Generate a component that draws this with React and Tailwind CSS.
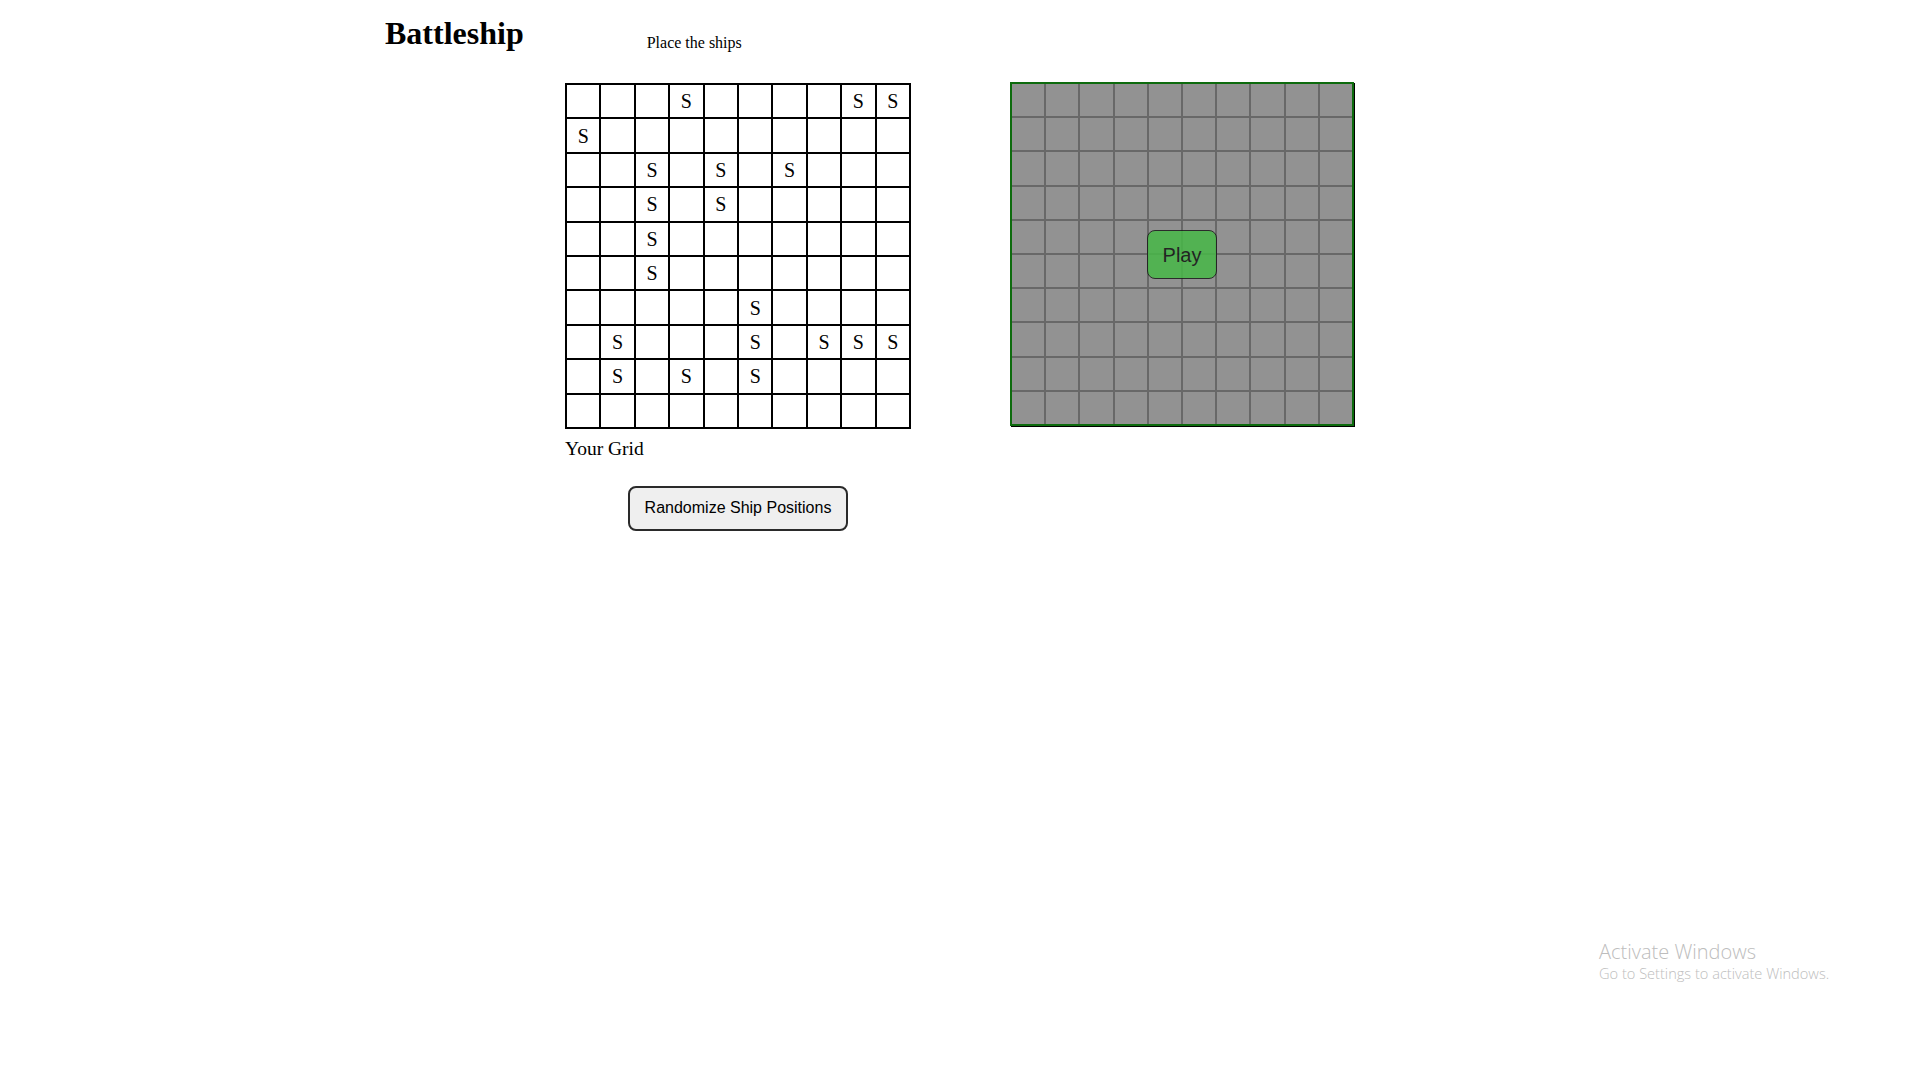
import React from "react";

const SHIPS = {
  0: [3, 8, 9],
  1: [0],
  2: [2, 4, 6],
  3: [2, 4],
  4: [2],
  5: [2],
  6: [5],
  7: [1, 5, 7, 8, 9],
  8: [1, 3, 5],
  9: [],
};

const serif = { fontFamily: '"Liberation Serif", "Times New Roman", serif' };
const sans = { fontFamily: '"Liberation Sans", Arial, sans-serif' };

export default function App() {
  const rows = Array.from({ length: 10 }, (_, r) => r);
  const cols = Array.from({ length: 10 }, (_, c) => c);
  return (
    <div className="relative w-[1920px] h-[1080px] bg-white text-black overflow-hidden" style={serif}>
      <header className="flex items-start">
        <h1 className="ml-[385px] mt-[15px] text-[32px] leading-[36px] font-bold" style={serif}>
          Battleship
        </h1>
        <p className="ml-[123px] mt-[33px] text-[16px] leading-[20px]" style={serif}>
          Place the ships
        </p>
      </header>

      <div className="flex items-start ml-[565px] mt-[29px] gap-[99px]">
        <div className="flex flex-col w-[346px] mt-px">
          <div className="grid grid-cols-10 gap-[2px] bg-black border-2 border-black w-[346px]">
            {rows.map((r) =>
              cols.map((c) => (
                <div
                  key={`${r}-${c}`}
                  className="w-[32.4px] h-[32.4px] bg-white flex items-center justify-center text-[20px] leading-none"
                  style={serif}
                >
                  {SHIPS[r].includes(c) ? "S" : ""}
                </div>
              ))
            )}
          </div>
          <p className="mt-[9px] text-[19.5px] leading-[22px]" style={serif}>
            Your Grid
          </p>
          <button
            className="mx-auto mt-[26px] w-[220px] h-[45px] rounded-[8px] border-2 border-[#2a2a2a] bg-[#efefef] text-[16px] leading-[18px] text-black"
            style={sans}
          >
            Randomize Ship Positions
          </button>
        </div>

        <div className="relative">
          <div className="grid grid-cols-10 gap-[2px] bg-[#686868] border-2 border-[#0d6b0d] shadow-[1px_1px_0_#000] w-[344px]">
            {rows.map((r) =>
              cols.map((c) => (
                <div key={`o-${r}-${c}`} className="w-[32.2px] h-[32.2px] bg-[#929292]" />
              ))
            )}
          </div>
          <button
            className="absolute left-[137px] top-[148px] w-[70px] h-[49px] rounded-[8px] border border-[#1a1a1a] bg-[#48b848] opacity-[0.85] text-[20px] leading-[24px] text-[#111]"
            style={sans}
          >
            Play
          </button>
        </div>
      </div>

      <div
        className="absolute left-[1599px] top-[940px] text-[#bdbdbd]"
        style={{ fontFamily: '"Open Sans", "Noto Sans", sans-serif' }}
      >
        <div className="text-[20px] leading-[24px] font-light">Activate Windows</div>
        <div className="text-[14.6px] leading-[19px] font-light">Go to Settings to activate Windows.</div>
      </div>
    </div>
  );
}
